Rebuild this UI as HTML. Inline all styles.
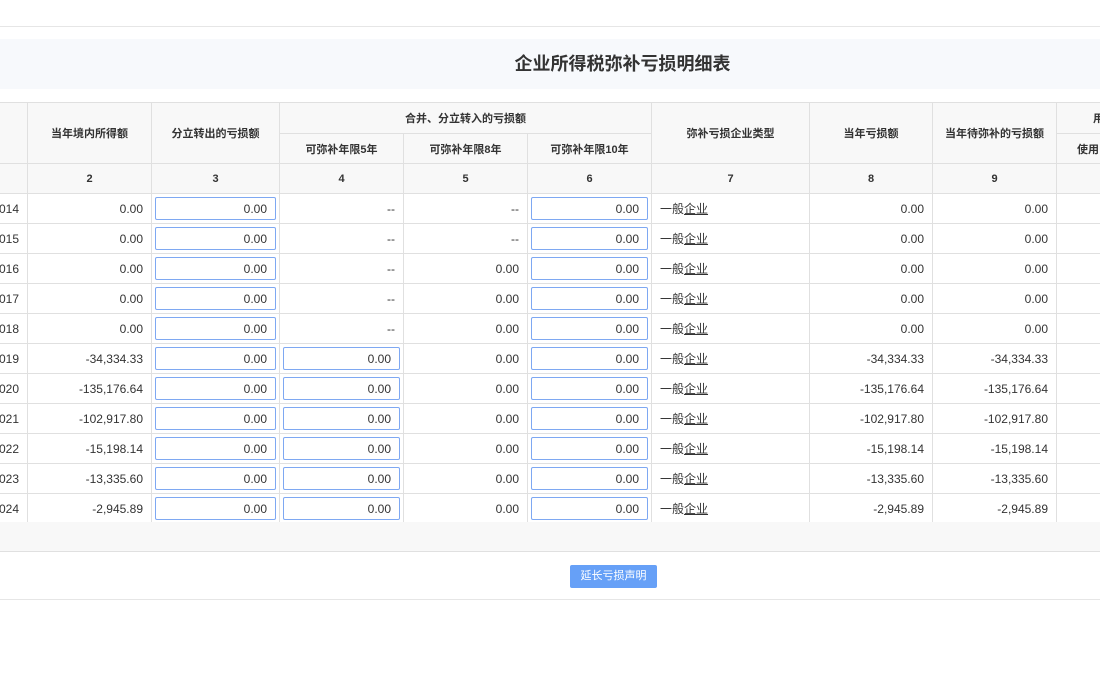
<!DOCTYPE html>
<html><head><meta charset="utf-8"><style>
*{box-sizing:border-box;margin:0;padding:0}
body{width:1100px;height:695px;overflow:hidden;background:#fff;font-family:"Liberation Sans","Noto Sans CJK SC",sans-serif;font-size:12px;color:#333;position:relative}
.tl{position:absolute;left:0;width:1100px;height:1px;background:#e6e6e6}
.title{position:absolute;left:0;top:39px;width:1100px;height:50px;background:#f7f9fc;font-size:18px;font-weight:bold;color:#333;line-height:50px;text-align:center;padding-left:145px}
table{position:absolute;left:-33px;top:102px;width:1213px;border-collapse:collapse;table-layout:fixed}
td,th{border:1px solid #e0e0e0;height:30px;padding:0 8px;white-space:nowrap;overflow:hidden;vertical-align:middle}
th{background:#f8f8f8;font-weight:bold;font-size:11px;color:#333;text-align:center}
td{text-align:right;font-size:12px}
td.l{text-align:left}
td.i{padding:0 3px}
.in{border:1px solid #7ea8f2;border-radius:2px;height:23px;line-height:22px;padding-right:8px;text-align:right}
u{text-decoration:underline}
.gray{position:absolute;left:0;top:522px;width:1100px;height:30px;background:#f8f8f8;border-bottom:1px solid #e0e0e0}
.btn{position:absolute;left:570px;top:565px;width:87px;height:23px;background:#66a0f7;color:#fff;border-radius:2px;text-align:center;line-height:23px;font-size:11px}
</style></head><body>
<div class="tl" style="top:26px"></div>
<div class="title">企业所得税弥补亏损明细表</div>
<table>
<colgroup><col style="width:60px"><col style="width:124px"><col style="width:128px"><col style="width:124px"><col style="width:124px"><col style="width:124px"><col style="width:158px"><col style="width:123px"><col style="width:124px"><col style="width:124px"></colgroup>
<tr style="height:31px"><th rowspan="2"></th><th rowspan="2">当年境内所得额</th><th rowspan="2">分立转出的亏损额</th><th colspan="3" style="height:31px">合并、分立转入的亏损额</th><th rowspan="2">弥补亏损企业类型</th><th rowspan="2">当年亏损额</th><th rowspan="2">当年待弥补的亏损额</th><th style="text-align:left;padding-left:36px">用</th></tr>
<tr style="height:29px"><th style="height:29px">可弥补年限5年</th><th>可弥补年限8年</th><th>可弥补年限10年</th><th style="text-align:left;padding-left:20px">使用</th></tr>
<tr><th></th><th>2</th><th>3</th><th>4</th><th>5</th><th>6</th><th>7</th><th>8</th><th>9</th><th></th></tr>
<tr><td>2014</td><td>0.00</td><td class="i"><div class="in">0.00</div></td><td>--</td><td>--</td><td class="i"><div class="in">0.00</div></td><td class="l">一般<u>企业</u></td><td>0.00</td><td>0.00</td><td></td></tr>
<tr><td>2015</td><td>0.00</td><td class="i"><div class="in">0.00</div></td><td>--</td><td>--</td><td class="i"><div class="in">0.00</div></td><td class="l">一般<u>企业</u></td><td>0.00</td><td>0.00</td><td></td></tr>
<tr><td>2016</td><td>0.00</td><td class="i"><div class="in">0.00</div></td><td>--</td><td>0.00</td><td class="i"><div class="in">0.00</div></td><td class="l">一般<u>企业</u></td><td>0.00</td><td>0.00</td><td></td></tr>
<tr><td>2017</td><td>0.00</td><td class="i"><div class="in">0.00</div></td><td>--</td><td>0.00</td><td class="i"><div class="in">0.00</div></td><td class="l">一般<u>企业</u></td><td>0.00</td><td>0.00</td><td></td></tr>
<tr><td>2018</td><td>0.00</td><td class="i"><div class="in">0.00</div></td><td>--</td><td>0.00</td><td class="i"><div class="in">0.00</div></td><td class="l">一般<u>企业</u></td><td>0.00</td><td>0.00</td><td></td></tr>
<tr><td>2019</td><td>-34,334.33</td><td class="i"><div class="in">0.00</div></td><td class="i"><div class="in">0.00</div></td><td>0.00</td><td class="i"><div class="in">0.00</div></td><td class="l">一般<u>企业</u></td><td>-34,334.33</td><td>-34,334.33</td><td></td></tr>
<tr><td>2020</td><td>-135,176.64</td><td class="i"><div class="in">0.00</div></td><td class="i"><div class="in">0.00</div></td><td>0.00</td><td class="i"><div class="in">0.00</div></td><td class="l">一般<u>企业</u></td><td>-135,176.64</td><td>-135,176.64</td><td></td></tr>
<tr><td>2021</td><td>-102,917.80</td><td class="i"><div class="in">0.00</div></td><td class="i"><div class="in">0.00</div></td><td>0.00</td><td class="i"><div class="in">0.00</div></td><td class="l">一般<u>企业</u></td><td>-102,917.80</td><td>-102,917.80</td><td></td></tr>
<tr><td>2022</td><td>-15,198.14</td><td class="i"><div class="in">0.00</div></td><td class="i"><div class="in">0.00</div></td><td>0.00</td><td class="i"><div class="in">0.00</div></td><td class="l">一般<u>企业</u></td><td>-15,198.14</td><td>-15,198.14</td><td></td></tr>
<tr><td>2023</td><td>-13,335.60</td><td class="i"><div class="in">0.00</div></td><td class="i"><div class="in">0.00</div></td><td>0.00</td><td class="i"><div class="in">0.00</div></td><td class="l">一般<u>企业</u></td><td>-13,335.60</td><td>-13,335.60</td><td></td></tr>
<tr><td>2024</td><td>-2,945.89</td><td class="i"><div class="in">0.00</div></td><td class="i"><div class="in">0.00</div></td><td>0.00</td><td class="i"><div class="in">0.00</div></td><td class="l">一般<u>企业</u></td><td>-2,945.89</td><td>-2,945.89</td><td></td></tr>
</table>
<div class="gray"></div>
<div class="btn">延长亏损声明</div>
<div class="tl" style="top:599px"></div>
</body></html>
